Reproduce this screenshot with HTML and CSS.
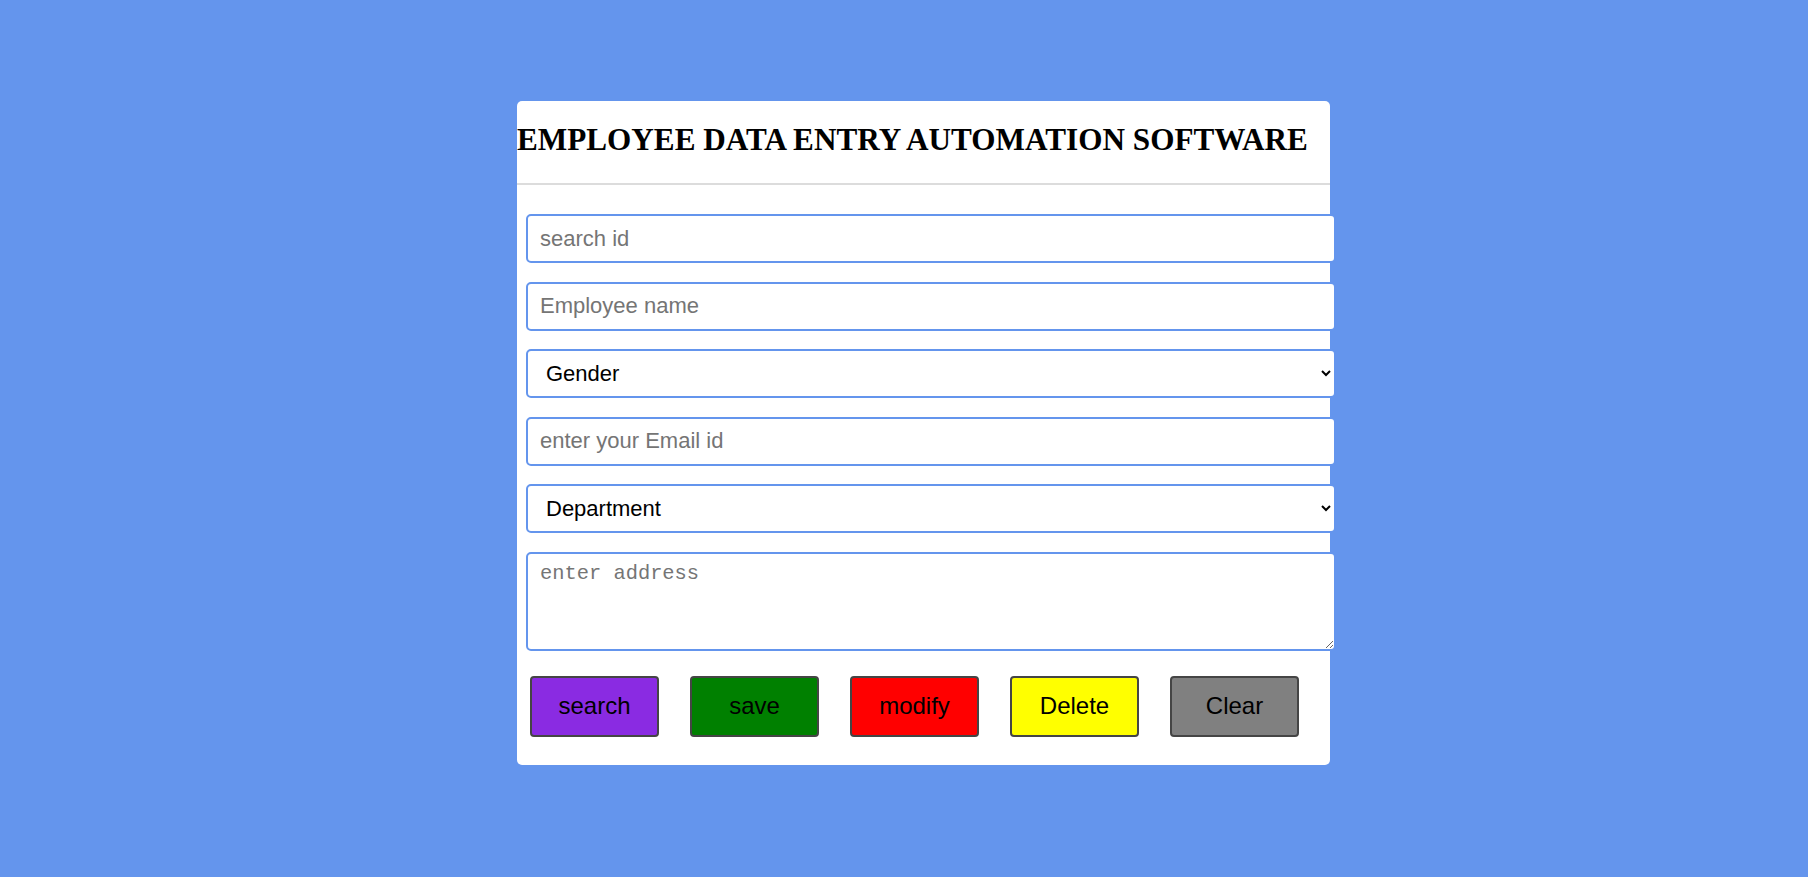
FILE: index.html
```html
<!DOCTYPE html>
<html lang="en">
<head>
<meta charset="utf-8">
<title>Employee Data Entry Automation Software</title>
<link rel="stylesheet" href="styles.css">
</head>
<body>
<div class="card">
  <div class="header">
    <h1 class="title">EMPLOYEE DATA ENTRY AUTOMATION SOFTWARE</h1>
  </div>
  <form class="form">
    <input class="field" type="text" placeholder="search id">
    <input class="field" type="text" placeholder="Employee name">
    <select class="field select">
      <option>Gender</option>
      <option>Male</option>
      <option>Female</option>
    </select>
    <input class="field" type="email" placeholder="enter your Email id">
    <select class="field select">
      <option>Department</option>
      <option>HR</option>
      <option>IT</option>
    </select>
    <textarea class="field area" placeholder="enter address"></textarea>
    <div class="actions">
      <button type="button" class="btn btn-search">search</button>
      <button type="button" class="btn btn-save">save</button>
      <button type="button" class="btn btn-modify">modify</button>
      <button type="button" class="btn btn-delete">Delete</button>
      <button type="button" class="btn btn-clear">Clear</button>
    </div>
  </form>
</div>
</body>
</html>
```

FILE: styles.css
```css
html, body {
  margin: 0;
  padding: 0;
}

body {
  background: #6495ed;
  min-height: 877px;
  font-family: "Liberation Sans", Arial, sans-serif;
  overflow: hidden;
}

.card {
  width: 813px;
  margin: 101px 0 0 517px;
  background: #ffffff;
  border-radius: 5px;
  padding-bottom: 28.5px;
}

.header {
  padding: 20px 0 25px 0;
  border-bottom: 2px solid #dcdcdc;
}

.title {
  margin: 0;
  font-family: "Liberation Serif", "Times New Roman", serif;
  font-weight: 700;
  font-size: 31.2px;
  line-height: 37px;
  color: #000;
  white-space: nowrap;
}

.form {
  display: flex;
  flex-direction: column;
  gap: 18.5px;
  padding: 29px 0 0 9px;
}

.field {
  box-sizing: border-box;
  width: 810px;
  height: 49px;
  margin: 0;
  border: 2px solid #6495ed;
  border-radius: 5px;
  background: #ffffff;
  padding: 0 12px;
  font-family: "Liberation Sans", Arial, sans-serif;
  font-size: 22px;
  color: #000;
  outline: none;
}

.field::placeholder {
  color: #757575;
}

.select {
  padding: 0 6px 0 14px;
}

.area {
  height: 99px;
  padding: 8px 12px;
  font-family: "Liberation Mono", "DejaVu Sans Mono", monospace;
  font-size: 20.4px;
  resize: vertical;
}

.actions {
  display: flex;
  gap: 31px;
  padding: 6.5px 0 0 4px;
}

.btn {
  box-sizing: border-box;
  width: 129px;
  height: 61px;
  margin: 0;
  border: 2px solid #454545;
  border-radius: 4px;
  font-family: "Liberation Sans", Arial, sans-serif;
  font-size: 24px;
  color: #000;
  padding: 0;
  cursor: pointer;
}

.btn-search { background: #8a2be2; }
.btn-save { background: #008000; }
.btn-modify { background: #ff0000; }
.btn-delete { background: #ffff00; }
.btn-clear { background: #808080; }
```
